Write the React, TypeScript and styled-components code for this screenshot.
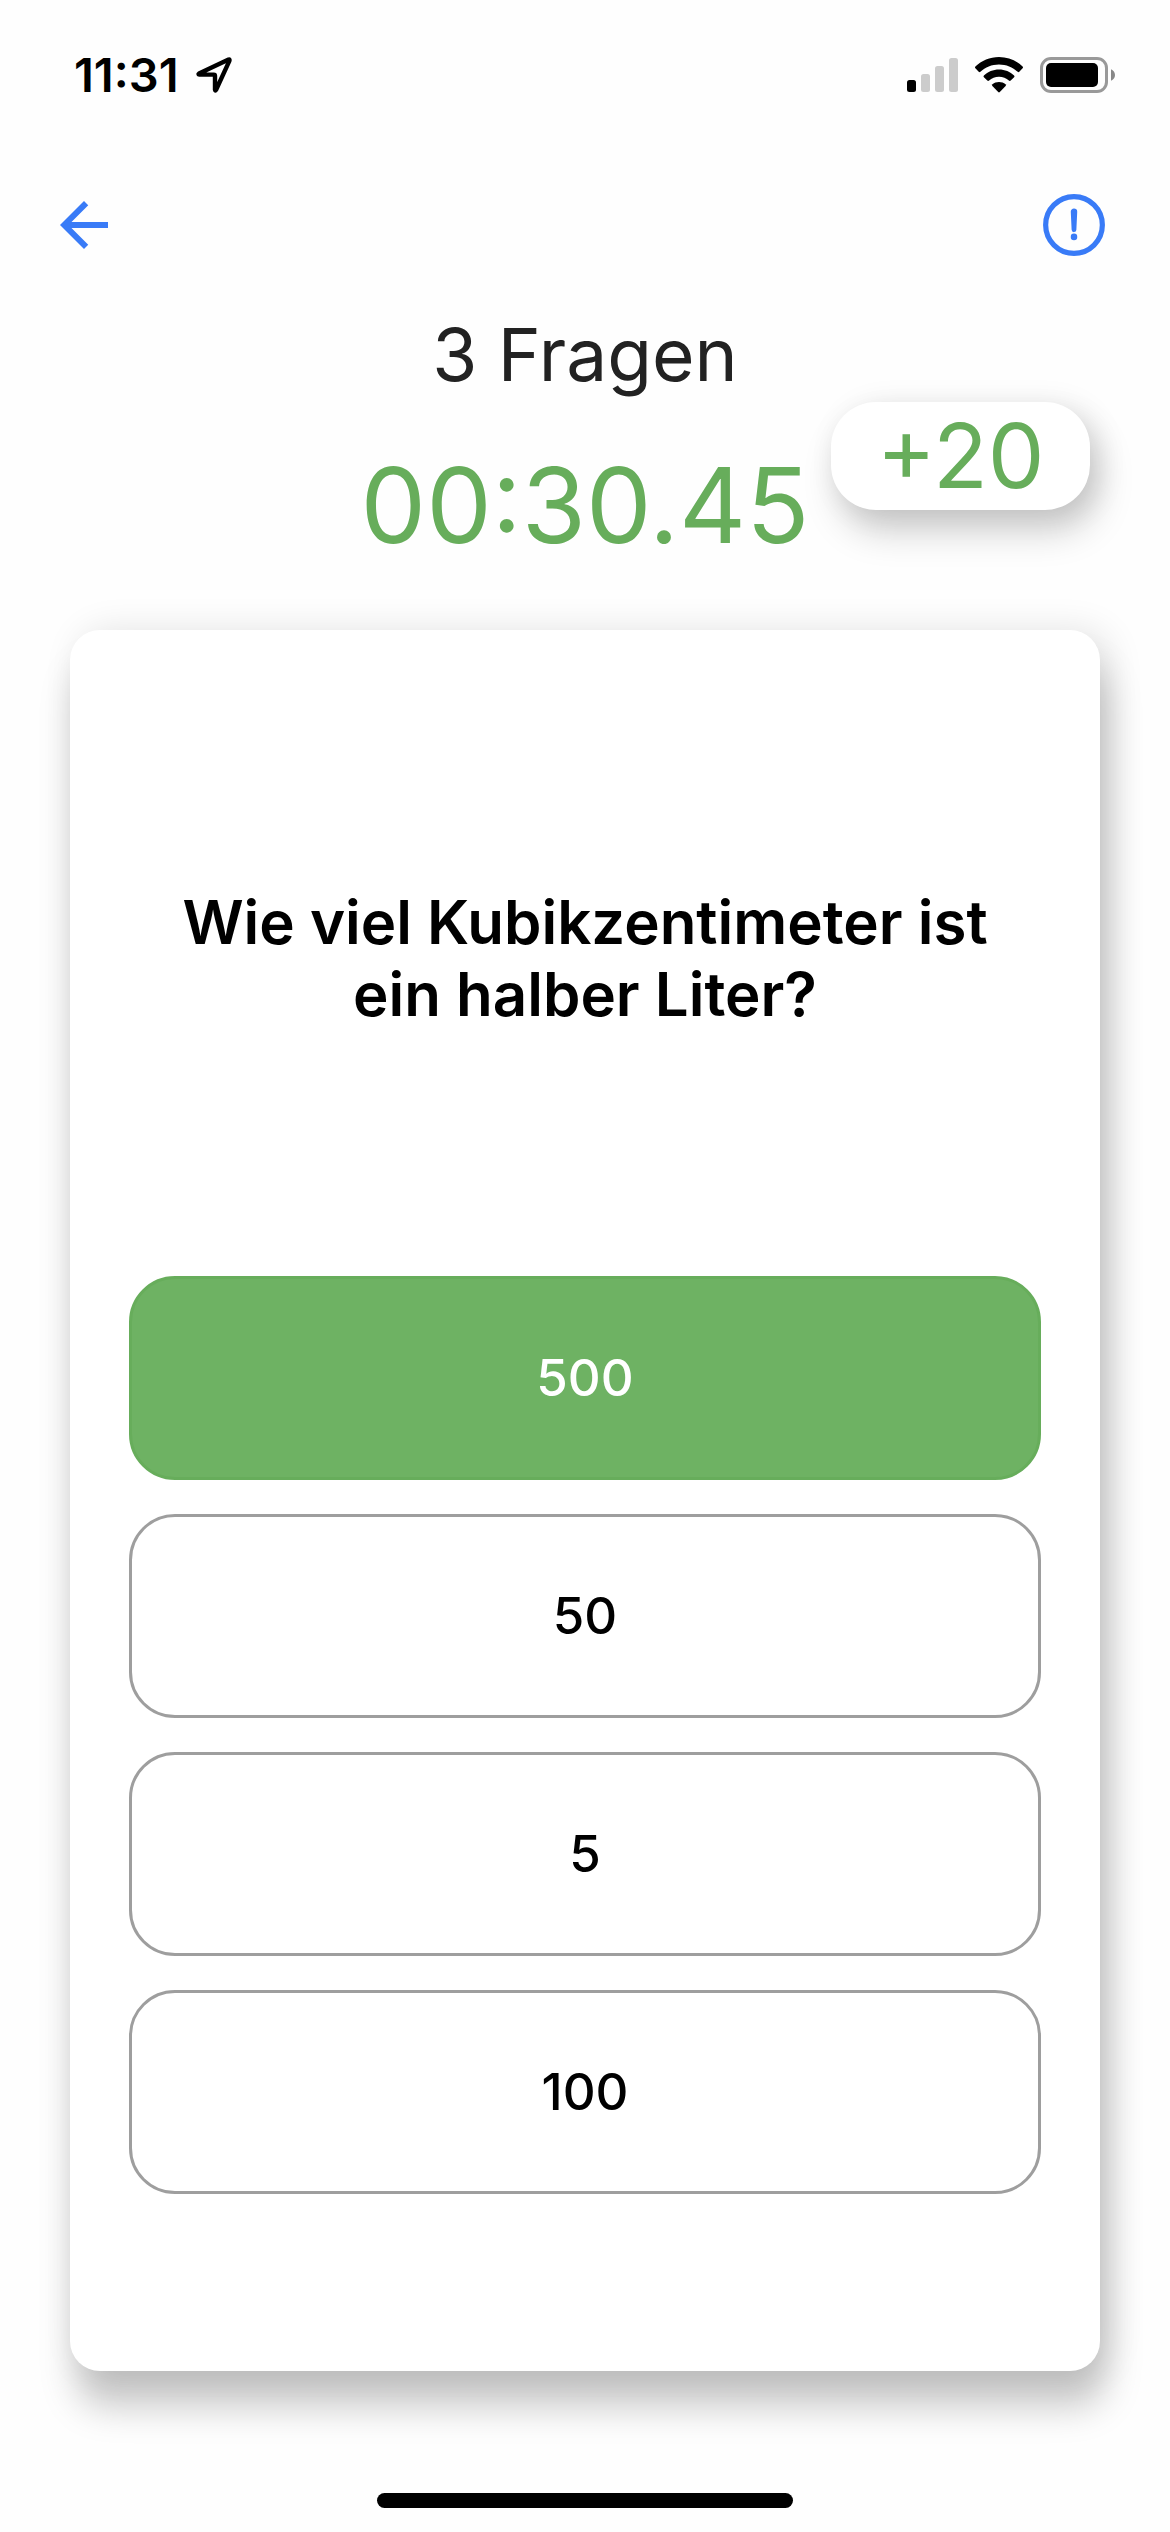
import React, { useState } from "react";
import styled, { createGlobalStyle } from "styled-components";

const GlobalStyle = createGlobalStyle`
  *, *::before, *::after { box-sizing: border-box; }
  body {
    margin: 0;
    background: #fefefe;
    color: #000;
    font-family: Inter, "Liberation Sans", sans-serif;
  }
`;

const Page = styled.div`
  display: flex;
  flex-direction: column;
  min-height: 100vh;
  overflow: hidden;
`;

const StatusBar = styled.div`
  display: flex;
  align-items: center;
  justify-content: space-between;
  height: 150px;
  padding: 0 54px 0 74px;
`;

const StatusGroup = styled.div<{ $gap: number }>`
  display: flex;
  align-items: center;
  gap: ${(p) => p.$gap}px;
`;

const Clock = styled.time`
  font-size: 47px;
  line-height: 56px;
  font-weight: 600;
`;

const Toolbar = styled.nav`
  display: flex;
  align-items: center;
  justify-content: space-between;
  height: 150px;
  padding: 0 58px 0 48px;
`;

const IconButton = styled.button`
  display: flex;
  padding: 0;
  border: 0;
  background: none;
  color: #397bf7;
  cursor: pointer;
`;

const Score = styled.header`
  position: relative;
  display: flex;
  flex-direction: column;
  align-items: center;
  gap: 56px;
  padding: 11px 0 75px;
`;

const Remaining = styled.h1`
  margin: 0;
  color: #222;
  font-size: 73px;
  line-height: 88px;
  font-weight: 400;
`;

const Timer = styled.div`
  color: #67ad5b;
  font-size: 104px;
  line-height: 100px;
  font-weight: 400;
`;

const Bonus = styled.div`
  position: absolute;
  top: 102px;
  right: 80px;
  display: flex;
  align-items: center;
  justify-content: center;
  width: 259px;
  height: 108px;
  border-radius: 45px;
  background: #fff;
  color: #67ad5b;
  font-size: 90px;
  line-height: 108px;
  box-shadow: 8px 22px 36px rgba(0, 0, 0, 0.18), 8px 4px 30px rgba(0, 0, 0, 0.1);
`;

const Card = styled.main`
  display: flex;
  flex: 1;
  flex-direction: column;
  margin: 0 70px;
  padding: 10px 59px 177px;
  border-radius: 30px;
  background: #fff;
  box-shadow: 6px 36px 36px rgba(0, 0, 0, 0.21), 9px 0 36px rgba(0, 0, 0, 0.11);
`;

const Question = styled.h2`
  display: flex;
  flex: 1;
  align-items: center;
  justify-content: center;
  margin: 0;
  padding: 0 24px;
  font-size: 60px;
  line-height: 72px;
  font-weight: 600;
  text-align: center;
`;

const Answers = styled.div`
  display: grid;
  gap: 34px;
`;

const Answer = styled.button<{ $correct: boolean }>`
  height: 204px;
  padding: 0;
  border: 3px solid ${(p) => (p.$correct ? "#67ad5b" : "#9e9e9e")};
  border-radius: 46px;
  background: ${(p) => (p.$correct ? "#6eb263" : "#fff")};
  color: ${(p) => (p.$correct ? "#fff" : "#000")};
  font-family: inherit;
  font-size: 51px;
  line-height: 60px;
  font-weight: 500;
  cursor: pointer;
`;

const HomeArea = styled.footer`
  display: flex;
  align-items: flex-end;
  justify-content: center;
  height: 161px;
  padding-bottom: 24px;
`;

const HomeIndicator = styled.div`
  width: 416px;
  height: 15px;
  border-radius: 8px;
  background: #000;
`;

const LocationIcon = () => (
  <svg width="38" height="38" viewBox="0 0 38 38" fill="none" aria-hidden="true">
    <path
      d="M4 17.6 L33.6 3.6 Q35 3.2 34.4 4.8 L21 34 Q20.2 35.4 20 33.8 V19.8 Q20 18.6 18.8 18.6 H4.4 Q2.8 18.4 4 17.6Z"
      stroke="#000"
      strokeWidth="4.4"
      strokeLinejoin="round"
    />
  </svg>
);

const SignalIcon = () => (
  <svg width="51" height="36" viewBox="0 0 51 36" aria-hidden="true">
    <rect x="0" y="23" width="9" height="12" rx="2.5" fill="#000" />
    <rect x="14" y="17" width="9" height="18" rx="2.5" fill="#ccc" />
    <rect x="28" y="9" width="9" height="26" rx="2.5" fill="#ccc" />
    <rect x="42" y="1" width="9" height="34" rx="2.5" fill="#ccc" />
  </svg>
);

const WifiIcon = () => (
  <svg width="48" height="36" viewBox="0 0 48 36" aria-hidden="true">
    <path d="M24 0C33.2 0 41.5 3.6 47.6 9.5Q48.4 10.4 47.6 11.3L44.3 14.8Q43.5 15.6 42.6 14.8C37.8 10.1 31.2 7.4 24 7.4S10.2 10.1 5.4 14.8Q4.5 15.6 3.7 14.8L.4 11.3Q-.4 10.4.4 9.5C6.5 3.6 14.8 0 24 0Z" />
    <path d="M24 12.4C29.9 12.4 35.2 14.7 39.1 18.4Q40 19.3 39.1 20.2L35.7 23.6Q34.8 24.4 33.9 23.6C31.3 21.3 27.8 19.8 24 19.8S16.7 21.3 14.1 23.6Q13.2 24.4 12.3 23.6L8.9 20.2Q8 19.3 8.9 18.4C12.8 14.7 18.1 12.4 24 12.4Z" />
    <path d="M24 25C26.5 25 28.8 25.8 30.5 27.3Q31.4 28.2 30.6 29.1L24.8 35Q24 35.8 23.2 35L17.4 29.1Q16.6 28.2 17.5 27.3C19.2 25.8 21.5 25 24 25Z" />
  </svg>
);

const BatteryIcon = () => (
  <svg width="76" height="36" viewBox="0 0 76 36" aria-hidden="true">
    <rect x="1.5" y="1.5" width="65" height="33" rx="9.5" fill="none" stroke="#999" strokeWidth="3" />
    <rect x="6" y="6" width="52" height="24" rx="5" fill="#000" />
    <path d="M71 12.2C73.4 13.2 75 15.3 75 18S73.4 22.8 71 23.8Z" fill="#888" />
  </svg>
);

const BackIcon = () => (
  <svg width="72" height="72" viewBox="0 0 24 24" fill="currentColor" aria-hidden="true">
    <path d="M20 11H7.83l5.59-5.59L12 4l-8 8 8 8 1.41-1.41L7.83 13H20v-2z" />
  </svg>
);

const AlertIcon = () => (
  <svg width="76" height="76" viewBox="0 0 512 512" fill="none" aria-hidden="true">
    <circle cx="256" cy="256" r="191" stroke="currentColor" strokeWidth="35" />
    <path
      d="M250.26 166.05L256 288l5.73-121.95a5.74 5.74 0 00-5.79-6 5.74 5.74 0 00-5.68 6z"
      stroke="currentColor"
      strokeWidth="32"
      strokeLinecap="round"
      strokeLinejoin="round"
    />
    <circle cx="256" cy="336" r="22" fill="currentColor" />
  </svg>
);

const options = ["500", "50", "5", "100"];

export default function App() {
  const [selected, setSelected] = useState("500");

  return (
    <>
      <GlobalStyle />
      <Page>
        <StatusBar>
          <StatusGroup $gap={16}>
            <Clock>11:31</Clock>
            <LocationIcon />
          </StatusGroup>
          <StatusGroup $gap={17}>
            <SignalIcon />
            <WifiIcon />
            <BatteryIcon />
          </StatusGroup>
        </StatusBar>
        <Toolbar>
          <IconButton type="button" aria-label="Zurück">
            <BackIcon />
          </IconButton>
          <IconButton type="button" aria-label="Frage melden">
            <AlertIcon />
          </IconButton>
        </Toolbar>
        <Score>
          <Remaining>3 Fragen</Remaining>
          <Timer>00:30.45</Timer>
          <Bonus>+20</Bonus>
        </Score>
        <Card>
          <Question>Wie viel Kubikzentimeter ist ein halber Liter?</Question>
          <Answers>
            {options.map((option) => (
              <Answer
                key={option}
                type="button"
                $correct={option === selected}
                onClick={() => setSelected(option)}
              >
                {option}
              </Answer>
            ))}
          </Answers>
        </Card>
        <HomeArea>
          <HomeIndicator />
        </HomeArea>
      </Page>
    </>
  );
}
